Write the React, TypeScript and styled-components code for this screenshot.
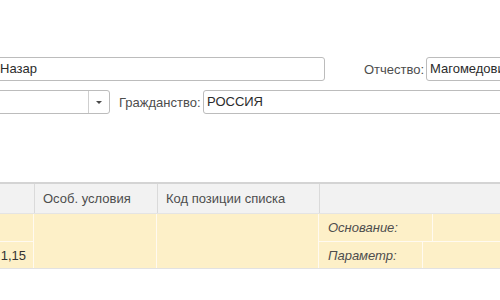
import { createGlobalStyle } from "styled-components";
import styled from "styled-components";

const GlobalStyle = createGlobalStyle`
  html, body {
    margin: 0;
    padding: 0;
    background: #ffffff;
    overflow: hidden;
  }
  body {
    font-family: "Liberation Sans", Arial, sans-serif;
    font-size: 13px;
    color: #333333;
  }
`;

const Page = styled.div`
  width: 560px;
  margin-left: -4px;
  padding-top: 57px;
  display: flex;
  flex-direction: column;
`;

const FormRow = styled.div`
  display: flex;
  align-items: center;
  height: 24px;
  margin-bottom: 9px;
`;

const Field = styled.div<{ $width?: number }>`
  box-sizing: border-box;
  height: 24px;
  ${(p) => (p.$width ? `width: ${p.$width}px;` : "flex: 1;")}
  border: 1px solid #bcbcbc;
  border-radius: 3px;
  background: #ffffff;
  display: flex;
  align-items: center;
  padding-left: 3px;
  color: #2b2b2b;
  white-space: nowrap;
  overflow: hidden;
`;

const FieldText = styled.span`
  flex: 1;
  line-height: 22px;
`;

const DropButton = styled.div`
  width: 20px;
  height: 22px;
  border-left: 1px solid #cfcfcf;
  display: flex;
  align-items: center;
  justify-content: center;

  &::after {
    content: "";
    border-left: 3px solid transparent;
    border-right: 3px solid transparent;
    border-top: 3px solid #4a4a4a;
  }
`;

const Label = styled.div<{ $offset: number; $width: number }>`
  margin-left: ${(p) => p.$offset}px;
  width: ${(p) => p.$width}px;
  color: #4d4d4d;
  white-space: nowrap;
`;

const Table = styled.div`
  margin-top: 59px;
  border-top: 2px solid #d4d4d4;
  border-bottom: 1px solid #e2e2e2;
`;

const HeaderRow = styled.div`
  display: grid;
  grid-template-columns: 38px 123px 162px 1fr;
  height: 29px;
  background: #f2f2f2;
  border-bottom: 1px solid #e4e4e4;
`;

const HeaderCell = styled.div<{ $first?: boolean }>`
  display: flex;
  align-items: center;
  padding-left: 8px;
  color: #4d4d4d;
  border-left: ${(p) => (p.$first ? "none" : "1px solid #dadada")};
  white-space: nowrap;
`;

const Body = styled.div`
  display: grid;
  grid-template-columns: 37px 122px 161px 1fr;
  grid-template-rows: 27px 26px;
  gap: 1px;
  background: #fffaf0;
`;

const Cell = styled.div<{ $span?: boolean; $align?: "left" | "right" }>`
  background: #fdf0c8;
  display: flex;
  align-items: center;
  justify-content: ${(p) => (p.$align === "right" ? "flex-end" : "flex-start")};
  padding: 0 7px 0 9px;
  ${(p) => (p.$span ? "grid-row: span 2;" : "")}
  color: #333333;
`;

const PairCell = styled.div<{ $labelWidth: number }>`
  display: grid;
  grid-template-columns: ${(p) => p.$labelWidth}px 1fr;
  gap: 1px;
`;

const ItalicLabel = styled.div`
  background: #fdf0c8;
  display: flex;
  align-items: center;
  padding-left: 9px;
  font-style: italic;
  color: #4d4d4d;
`;

const Blank = styled.div`
  background: #fdf0c8;
`;

export default function App() {
  return (
    <>
      <GlobalStyle />
      <Page>
        <FormRow>
          <Field $width={329}>
            <FieldText>Назар</FieldText>
          </Field>
          <Label $offset={39} $width={62}>
            Отчество:
          </Label>
          <Field>
            <FieldText>Магомедович</FieldText>
          </Field>
        </FormRow>
        <FormRow>
          <Field $width={114}>
            <FieldText />
            <DropButton />
          </Field>
          <Label $offset={9} $width={84}>
            Гражданство:
          </Label>
          <Field>
            <FieldText>РОССИЯ</FieldText>
          </Field>
        </FormRow>

        <Table>
          <HeaderRow>
            <HeaderCell $first />
            <HeaderCell>Особ. условия</HeaderCell>
            <HeaderCell>Код позиции списка</HeaderCell>
            <HeaderCell />
          </HeaderRow>
          <Body>
            <Cell />
            <Cell $span />
            <Cell $span />
            <PairCell $labelWidth={113}>
              <ItalicLabel>Основание:</ItalicLabel>
              <Blank />
            </PairCell>
            <Cell $align="right">1,15</Cell>
            <PairCell $labelWidth={103}>
              <ItalicLabel>Параметр:</ItalicLabel>
              <Blank />
            </PairCell>
          </Body>
        </Table>
      </Page>
    </>
  );
}
